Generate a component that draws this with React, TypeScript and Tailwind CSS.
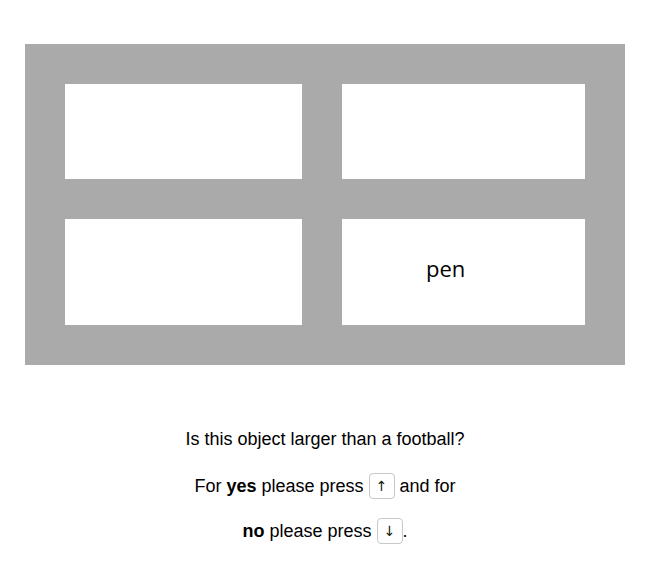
export default function App() {
  return (
    <div className="w-[650px] h-[568px] bg-white font-['Liberation_Sans',Arial,sans-serif] text-black">
      <div className="pt-[44px] pl-[25px]">
        <div className="w-[600px] h-[321px] bg-[#aaaaaa] p-[40px] grid grid-cols-[237px_243px] grid-rows-[95px_106px] gap-[40px]">
          <div className="bg-white" />
          <div className="bg-white" />
          <div className="bg-white" />
          <div className="bg-white flex items-center pl-[84px] pb-[8px] text-[22px] font-['Open_Sans',sans-serif]">pen</div>
        </div>
      </div>
      <div className="mt-[63px] flex flex-col items-center text-[18px]">
        <p className="h-[22px] leading-[22px]">Is this object larger than a football?</p>
        <p className="mt-[22px] h-[28px] flex items-center">
          For&nbsp;<b>yes</b>&nbsp;please press
          <kbd className="ml-[5px] mr-[5px] w-[26px] h-[26px] border border-[#c8c8c8] rounded-[4px] flex items-center justify-center text-[14px] font-['DejaVu_Sans',sans-serif] text-[#10200a]">↑</kbd>
          and for
        </p>
        <p className="mt-[17px] h-[28px] flex items-center">
          <b>no</b>&nbsp;please press
          <kbd className="ml-[5px] w-[26px] h-[26px] border border-[#c8c8c8] rounded-[4px] flex items-center justify-center text-[14px] font-['DejaVu_Sans',sans-serif] text-[#10200a]">↓</kbd>
          .
        </p>
      </div>
    </div>
  );
}
